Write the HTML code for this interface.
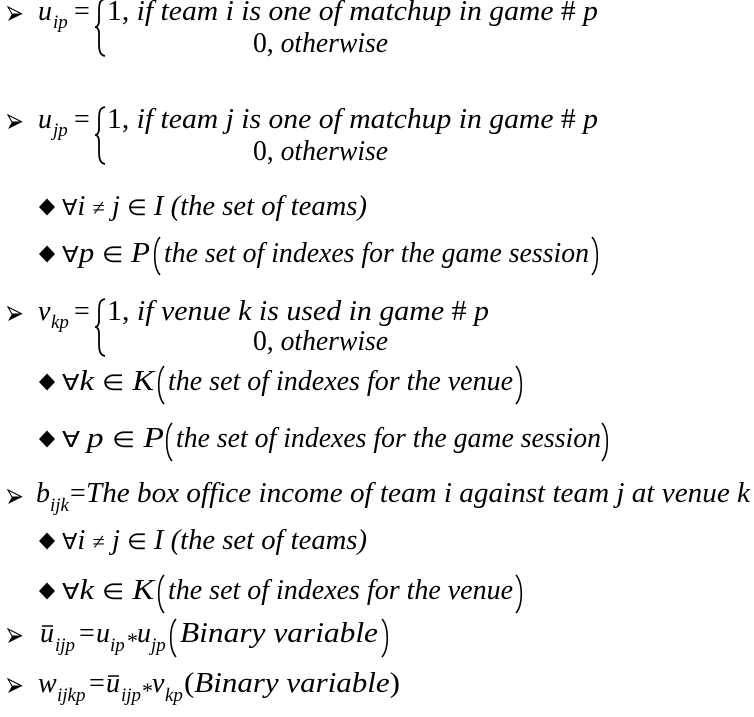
<!DOCTYPE html>
<html><head><meta charset="utf-8"><style>
html,body{margin:0;padding:0;background:#fff;width:754px;height:717px;overflow:hidden}
svg{display:block}
text{font-family:"Liberation Serif",serif;font-style:italic;fill:#000;font-size:28px}
.r{font-style:normal}
.m{font-style:normal;font-size:22px}
.s{font-size:19px}
</style></head><body>
<svg width="754" height="717" viewBox="0 0 754 717">
<defs>
<g id="arr"><path d="M0,-7 L14,0 L4,0 Z" fill="none" stroke="#000" stroke-width="1"/><path d="M4,0 L14,0 L0,7 Z"/></g>
<path id="dia" d="M0,-8.5 L8,0 L0,8.5 L-8,0 Z"/>
<path id="brace" d="M10,0 C4,1 4,6 4,14 L4,22 C4,26 2,28 0,28 C2,28 4,30 4,34 L4,44 C4,52 5,56 10,57" fill="none" stroke="#000" stroke-width="1.8"/>
<path id="lp" d="M8,0 C1,8 1,30 8,38" fill="none" stroke="#000" stroke-width="1.6"/>
<path id="rp" d="M0,0 C7,8 7,30 0,38" fill="none" stroke="#000" stroke-width="1.6"/>
</defs>

<use href="#arr" x="8" y="14"/>
<text x="38" y="20">u</text><text class="s" x="53" y="28">ip</text>
<text class="r" x="74" y="20">=</text>
<use href="#brace" x="95" y="-1"/>
<text x="107" y="20" textLength="491" lengthAdjust="spacingAndGlyphs"><tspan class="r">1, </tspan>if team i is one of matchup in game <tspan class="r">#</tspan> p</text>
<text x="253" y="52" textLength="135" lengthAdjust="spacingAndGlyphs"><tspan class="r">0, </tspan>otherwise</text>

<use href="#arr" x="8" y="122"/>
<text x="38" y="128">u</text><text class="s" x="53" y="136">jp</text>
<text class="r" x="74" y="128">=</text>
<use href="#brace" x="95" y="107"/>
<text x="107" y="128" textLength="491" lengthAdjust="spacingAndGlyphs"><tspan class="r">1, </tspan>if team j is one of matchup in game <tspan class="r">#</tspan> p</text>
<text x="253" y="160" textLength="135" lengthAdjust="spacingAndGlyphs"><tspan class="r">0, </tspan>otherwise</text>

<use href="#dia" x="47" y="207"/>
<text x="62" y="215" textLength="305" lengthAdjust="spacingAndGlyphs"><tspan class="m">∀</tspan>i <tspan class="m">≠</tspan> j <tspan class="m">∈</tspan> I (the set of teams)</text>

<use href="#dia" x="47" y="254"/>
<text x="62" y="262" textLength="88" lengthAdjust="spacingAndGlyphs"><tspan class="m">∀</tspan>p <tspan class="m">∈</tspan> P</text>
<use href="#lp" x="152" y="237"/>
<text x="164" y="262" textLength="425" lengthAdjust="spacingAndGlyphs">the set of indexes for the game session</text>
<use href="#rp" x="592" y="237"/>

<use href="#arr" x="8" y="314"/>
<text x="38" y="320">v</text><text class="s" x="51" y="328">kp</text>
<text class="r" x="74" y="320">=</text>
<use href="#brace" x="95" y="299"/>
<text x="107" y="320" textLength="382" lengthAdjust="spacingAndGlyphs"><tspan class="r">1, </tspan>if venue k is used in game <tspan class="r">#</tspan> p</text>
<text x="253" y="350" textLength="135" lengthAdjust="spacingAndGlyphs"><tspan class="r">0, </tspan>otherwise</text>

<use href="#dia" x="47" y="382"/>
<text x="62" y="390" textLength="92" lengthAdjust="spacingAndGlyphs"><tspan class="m">∀</tspan>k <tspan class="m">∈</tspan> K</text>
<use href="#lp" x="156" y="366"/>
<text x="168" y="390" textLength="345" lengthAdjust="spacingAndGlyphs">the set of indexes for the venue</text>
<use href="#rp" x="516" y="366"/>

<use href="#dia" x="47" y="439"/>
<text x="62" y="447" textLength="102" lengthAdjust="spacingAndGlyphs"><tspan class="m">∀ </tspan>p <tspan class="m">∈</tspan> P</text>
<use href="#lp" x="164" y="423"/>
<text x="176" y="447" textLength="425" lengthAdjust="spacingAndGlyphs">the set of indexes for the game session</text>
<use href="#rp" x="602" y="423"/>

<use href="#arr" x="8" y="497"/>
<text x="36" y="502">b</text><text class="s" x="50" y="511">ijk</text>
<text class="r" x="70" y="502">=</text>
<text x="86" y="502" textLength="664" lengthAdjust="spacingAndGlyphs">The box office income of team i against team j at venue k</text>

<use href="#dia" x="47" y="541"/>
<text x="62" y="549" textLength="305" lengthAdjust="spacingAndGlyphs"><tspan class="m">∀</tspan>i <tspan class="m">≠</tspan> j <tspan class="m">∈</tspan> I (the set of teams)</text>

<use href="#dia" x="47" y="591"/>
<text x="62" y="599" textLength="92" lengthAdjust="spacingAndGlyphs"><tspan class="m">∀</tspan>k <tspan class="m">∈</tspan> K</text>
<use href="#lp" x="156" y="575"/>
<text x="168" y="599" textLength="345" lengthAdjust="spacingAndGlyphs">the set of indexes for the venue</text>
<use href="#rp" x="516" y="575"/>

<use href="#arr" x="8" y="636"/>
<line x1="42" y1="626" x2="53" y2="626" stroke="#000" stroke-width="1.5"/>
<text x="40" y="642">u</text><text class="s" x="55" y="651">ijp</text>
<text class="r" x="79" y="642">=</text>
<text x="96" y="642">u</text><text class="s" x="110" y="651">ip</text>
<text class="m" x="127" y="648">*</text>
<text x="137" y="642">u</text><text class="s" x="151" y="651">jp</text>
<use href="#lp" x="168" y="619"/>
<text x="180" y="642" textLength="198" lengthAdjust="spacingAndGlyphs">Binary variable</text>
<use href="#rp" x="382" y="619"/>

<use href="#arr" x="8" y="686"/>
<text x="38" y="692">w</text><text class="s" x="57" y="701">ijkp</text>
<text class="r" x="89" y="692">=</text>
<line x1="108" y1="676" x2="119" y2="676" stroke="#000" stroke-width="1.5"/>
<text x="106" y="692">u</text><text class="s" x="121" y="701">ijp</text>
<text class="m" x="142" y="698">*</text>
<text x="152" y="692">v</text><text class="s" x="165" y="701">kp</text>
<text x="184" y="692" textLength="216" lengthAdjust="spacingAndGlyphs"><tspan class="r">(</tspan>Binary variable<tspan class="r">)</tspan></text>
</svg>
</body></html>
